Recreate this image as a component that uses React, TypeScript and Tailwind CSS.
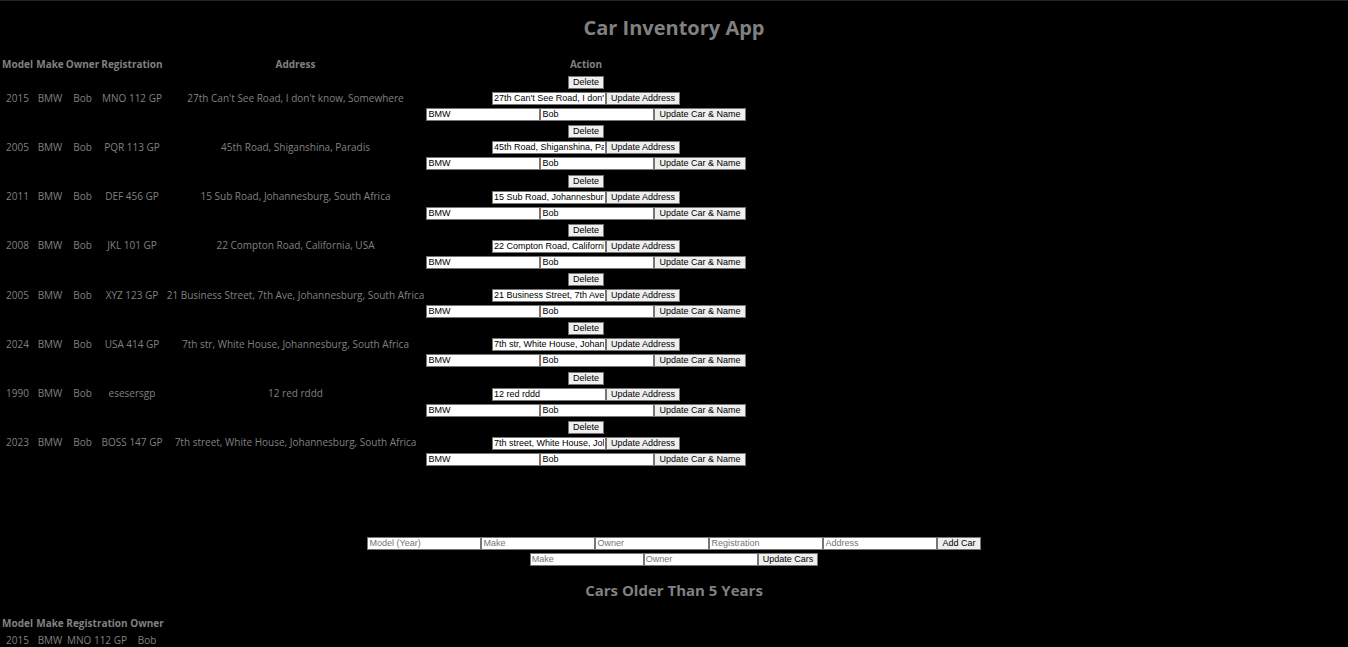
import React from "react";

interface Car {
  model: number;
  make: string;
  owner: string;
  registration: string;
  address: string;
}

const cars: Car[] = [
  { model: 2015, make: "BMW", owner: "Bob", registration: "MNO 112 GP", address: "27th Can't See Road, I don't know, Somewhere" },
  { model: 2005, make: "BMW", owner: "Bob", registration: "PQR 113 GP", address: "45th Road, Shiganshina, Paradis" },
  { model: 2011, make: "BMW", owner: "Bob", registration: "DEF 456 GP", address: "15 Sub Road, Johannesburg, South Africa" },
  { model: 2008, make: "BMW", owner: "Bob", registration: "JKL 101 GP", address: "22 Compton Road, California, USA" },
  { model: 2005, make: "BMW", owner: "Bob", registration: "XYZ 123 GP", address: "21 Business Street, 7th Ave, Johannesburg, South Africa" },
  { model: 2024, make: "BMW", owner: "Bob", registration: "USA 414 GP", address: "7th str, White House, Johannesburg, South Africa" },
  { model: 1990, make: "BMW", owner: "Bob", registration: "esesersgp", address: "12 red rddd" },
  { model: 2023, make: "BMW", owner: "Bob", registration: "BOSS 147 GP", address: "7th street, White House, Johannesburg, South Africa" },
];

const controlFont = "font-['Liberation_Sans',Arial,sans-serif] text-[9px] leading-[11px]";

function Field({ label, value }: { label: string; value?: string }) {
  return (
    <input
      type="text"
      aria-label={label}
      placeholder={label}
      defaultValue={value}
      className={`${controlFont} h-[13px] w-[114px] border border-[#767676] bg-white px-px pb-px text-black placeholder:text-[#757575]`}
    />
  );
}

function Button({ children }: { children: React.ReactNode }) {
  return (
    <button
      type="button"
      className={`${controlFont} h-[13px] border border-[#767676] bg-[#efefef] px-1 whitespace-nowrap text-black`}
    >
      {children}
    </button>
  );
}

export default function App() {
  return (
    <div className="min-h-screen border-t border-[#212529] bg-black text-center font-['Open_Sans','Noto_Sans',sans-serif] text-[10px] leading-4 text-[#808080]">
      <h1 className="pt-[13px] text-[20px] leading-7 font-bold">Car Inventory App</h1>

      <table className="mt-[14px] h-[411px] w-[745px] table-fixed border-collapse whitespace-nowrap">
        <colgroup>
          <col className="w-[35px]" />
          <col className="w-[30px]" />
          <col className="w-[35px]" />
          <col className="w-[64px]" />
          <col className="w-[263px]" />
          <col />
        </colgroup>
        <thead>
          <tr className="h-[17px] align-top">
            <th>Model</th>
            <th>Make</th>
            <th>Owner</th>
            <th>Registration</th>
            <th>Address</th>
            <th>Action</th>
          </tr>
        </thead>
        <tbody>
          {cars.map((car) => (
            <tr key={car.registration}>
              <td>{car.model}</td>
              <td>{car.make}</td>
              <td>{car.owner}</td>
              <td>{car.registration}</td>
              <td>{car.address}</td>
              <td>
                <div className="flex flex-col items-center gap-[3px] pt-[3px] pb-px">
                  <Button>Delete</Button>
                  <form className="flex">
                    <Field label="New Address" value={car.address} />
                    <Button>Update Address</Button>
                  </form>
                  <form className="flex">
                    <Field label="Make" value={car.make} />
                    <Field label="Owner" value={car.owner} />
                    <Button>Update Car &amp; Name</Button>
                  </form>
                </div>
              </td>
            </tr>
          ))}
        </tbody>
      </table>

      <form className="mt-[70px] flex justify-center">
        <Field label="Model (Year)" />
        <Field label="Make" />
        <Field label="Owner" />
        <Field label="Registration" />
        <Field label="Address" />
        <Button>Add Car</Button>
      </form>
      <form className="mt-[3px] flex justify-center">
        <Field label="Make" />
        <Field label="Owner" />
        <Button>Update Cars</Button>
      </form>

      <h2 className="mt-3 text-[15px] leading-6 font-bold">Cars Older Than 5 Years</h2>

      <table className="mt-[13px] w-[165px] table-fixed border-collapse whitespace-nowrap">
        <colgroup>
          <col className="w-[35px]" />
          <col className="w-[30px]" />
          <col className="w-[64px]" />
          <col />
        </colgroup>
        <thead>
          <tr className="h-[17px] align-top">
            <th>Model</th>
            <th>Make</th>
            <th>Registration</th>
            <th>Owner</th>
          </tr>
        </thead>
        <tbody>
          <tr>
            <td>2015</td>
            <td>BMW</td>
            <td>MNO 112 GP</td>
            <td>Bob</td>
          </tr>
        </tbody>
      </table>
    </div>
  );
}
